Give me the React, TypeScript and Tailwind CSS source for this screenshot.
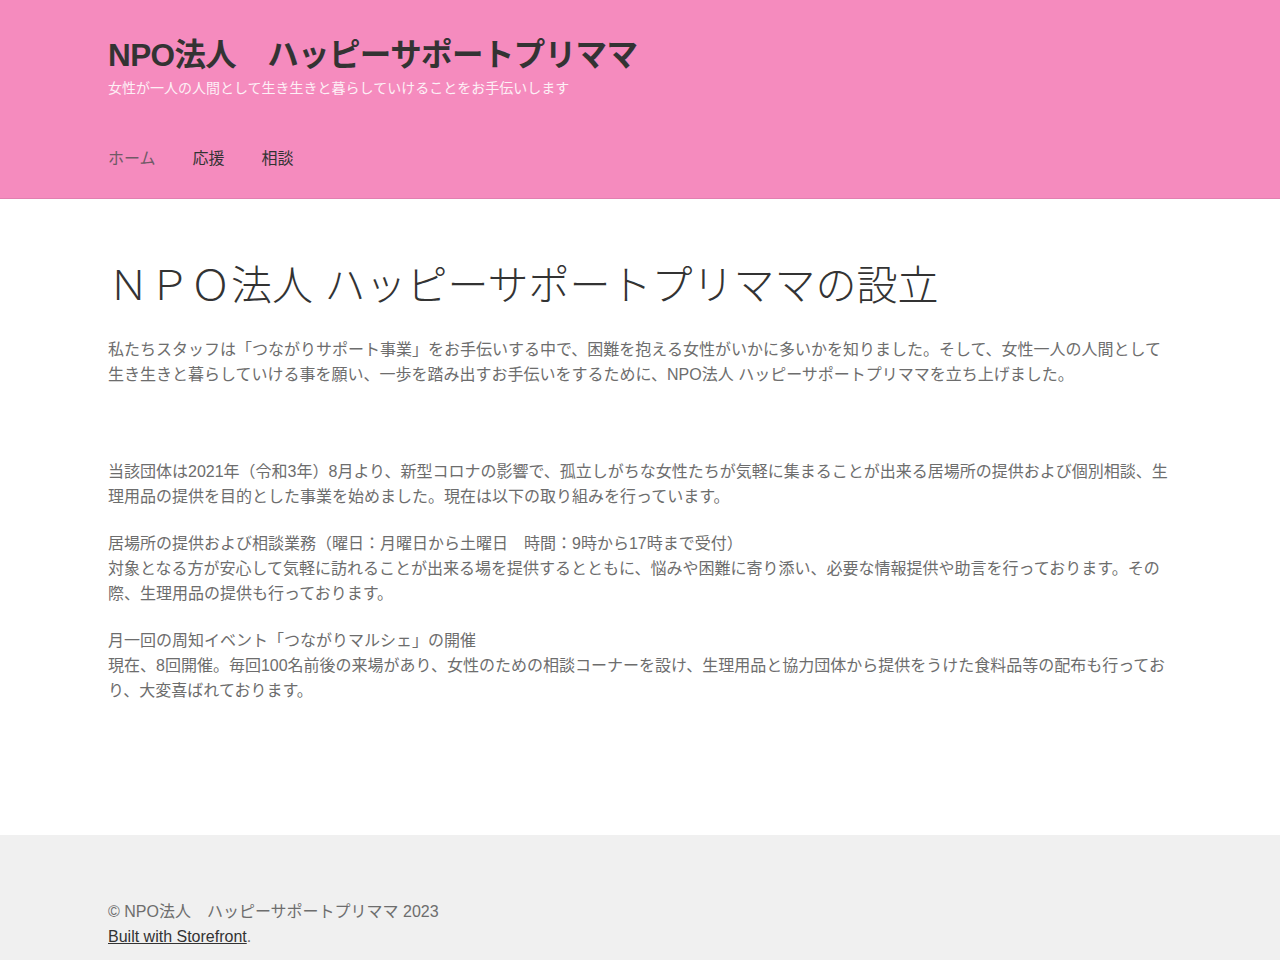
import React from 'react';

const font = { fontFamily: '"Liberation Sans", "Noto Sans CJK JP", sans-serif' };

const navItems = [
	{ label: 'ホーム', current: true },
	{ label: '応援', current: false },
	{ label: '相談', current: false },
];

function Header() {
	return (
		<header className="border-b border-[#e27fb0] bg-[#f58bbe]">
			<div className="mx-auto w-[1064px] pt-[35px]">
				<h1 className="text-[31.5px] font-bold leading-[40px] tracking-[-0.6px] text-[#333333]">
					NPO法人　ハッピーサポートプリママ
				</h1>
				<p className="mt-[4px] text-[14px] leading-[18px] text-[#fdf0f6]">
					女性が一人の人間として生き生きと暮らしていけることをお手伝いします
				</p>
				<nav className="mt-[42px] flex h-[59px] items-start gap-[37px]">
					{navItems.map((item) => (
						<a
							key={item.label}
							href="#"
							className={`text-[16px] leading-[40px] ${item.current ? 'text-[#6f5a66]' : 'text-[#333333]'}`}
						>
							{item.label}
						</a>
					))}
				</nav>
			</div>
		</header>
	);
}

function Content() {
	return (
		<main className="mx-auto w-[1064px] pb-[132px] pt-[59px] text-[16px] leading-[25px] text-[#6d6d6d]">
			<h2 className="mb-[23px] text-[41px] font-light leading-[56px] text-[#333333]">
				ＮＰＯ法人 ハッピーサポートプリママの設立
			</h2>
			<p className="mb-[22px]">
				私たちスタッフは「つながりサポート事業」をお手伝いする中で、困難を抱える女性がいかに多いかを知りました。そして、女性一人の人間として生き生きと暮らしていける事を願い、一歩を踏み出すお手伝いをするために、NPO法人 ハッピーサポートプリママを立ち上げました。
			</p>
			<p className="mb-[25px]">&nbsp;</p>
			<p className="mb-[22px]">
				当該団体は2021年（令和3年）8月より、新型コロナの影響で、孤立しがちな女性たちが気軽に集まることが出来る居場所の提供および個別相談、生理用品の提供を目的とした事業を始めました。現在は以下の取り組みを行っています。
			</p>
			<p className="mb-[22px]">
				居場所の提供および相談業務（曜日：月曜日から土曜日　時間：9時から17時まで受付）
				<br />
				対象となる方が安心して気軽に訪れることが出来る場を提供するとともに、悩みや困難に寄り添い、必要な情報提供や助言を行っております。その際、生理用品の提供も行っております。
			</p>
			<p>
				月一回の周知イベント「つながりマルシェ」の開催
				<br />
				現在、8回開催。毎回100名前後の来場があり、女性のための相談コーナーを設け、生理用品と協力団体から提供をうけた食料品等の配布も行っており、大変喜ばれております。
			</p>
		</main>
	);
}

function Footer() {
	return (
		<footer className="bg-[#f0f0f0]">
			<div className="mx-auto w-[1064px] pb-[20px] pt-[64px] text-[16px] leading-[25px] text-[#6d6d6d]">
				<p>© NPO法人　ハッピーサポートプリママ 2023</p>
				<p>
					<a href="#" className="text-[#333333] underline">
						Built with Storefront
					</a>
					.
				</p>
			</div>
		</footer>
	);
}

export default function App() {
	return (
		<div className="min-h-screen bg-white" style={font}>
			<Header />
			<Content />
			<Footer />
		</div>
	);
}
